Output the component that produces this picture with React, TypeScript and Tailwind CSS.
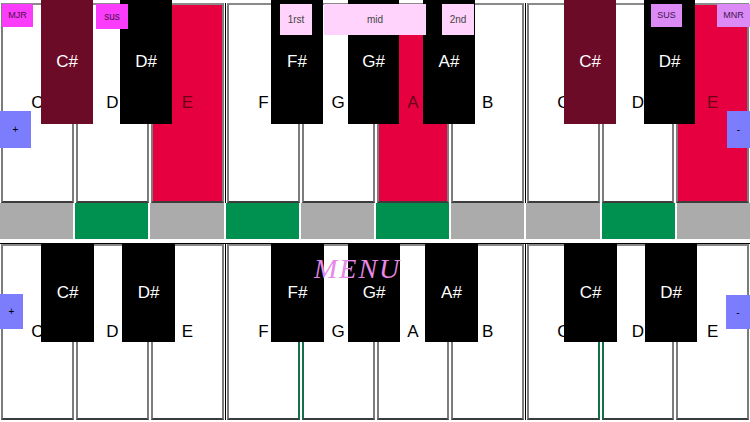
type Tone = 'white' | 'red'

type WKey = { label: string; tone?: Tone; left?: string; right?: string }

const topGroups: WKey[][] = [
  [{ label: 'C' }, { label: 'D' }, { label: 'E', tone: 'red' }],
  [{ label: 'F' }, { label: 'G' }, { label: 'A', tone: 'red' }, { label: 'B' }],
  [{ label: 'C' }, { label: 'D' }, { label: 'E', tone: 'red' }],
]

const bottomGroups: WKey[][] = [
  [{ label: 'C' }, { label: 'D' }, { label: 'E' }],
  [{ label: 'F', right: 'green' }, { label: 'G', left: 'green' }, { label: 'A' }, { label: 'B' }],
  [{ label: 'C', right: 'green' }, { label: 'D', left: 'green' }, { label: 'E' }],
]

const bars = [false, true, false, true, false, true, false, false, true, false]

type BKey = { label: string; left: number; width: number; dark?: boolean }

const topBlack: BKey[] = [
  { label: 'C#', left: 41, width: 52, dark: true },
  { label: 'D#', left: 120, width: 52 },
  { label: 'F#', left: 271, width: 52 },
  { label: 'G#', left: 348, width: 51 },
  { label: 'A#', left: 423, width: 52 },
  { label: 'C#', left: 564, width: 52, dark: true },
  { label: 'D#', left: 644, width: 51 },
]

const bottomBlack: BKey[] = [
  { label: 'C#', left: 41, width: 53 },
  { label: 'D#', left: 122, width: 53 },
  { label: 'F#', left: 271, width: 53 },
  { label: 'G#', left: 348, width: 52 },
  { label: 'A#', left: 425, width: 53 },
  { label: 'C#', left: 564, width: 53 },
  { label: 'D#', left: 645, width: 52 },
]

function WhiteKey({ k }: { k: WKey }) {
  const bg = k.tone === 'red' ? 'bg-[#e6003f] text-[#6a0019]' : 'bg-white text-black'
  const l = k.left === 'green' ? 'border-l-[#14704a]' : 'border-l-[#7c7c7c]'
  const r = k.right === 'green' ? 'border-r-[#14704a]' : 'border-r-[#7c7c7c]'
  return (
    <div className="flex-1 h-full px-[1px]">
      <div
        className={`h-full border-2 border-t-[#8a8a8a] border-b-[#3c3c3c] ${l} ${r} ${bg} flex items-center justify-center text-[17px]`}
      >
        {k.label}
      </div>
    </div>
  )
}

function Keyboard({ groups }: { groups: WKey[][] }) {
  return (
    <div className="flex h-full">
      {groups.map((g, i) => (
        <div
          key={i}
          className={`flex h-full ${i === 0 ? 'w-[225px]' : i === 1 ? 'w-[300px] border-l border-black' : 'flex-1 border-l border-black'}`}
        >
          {g.map((k, j) => (
            <WhiteKey key={j} k={k} />
          ))}
        </div>
      ))}
    </div>
  )
}

// sharps sit on top of the white keys
function BlackKeys({ keys, top, height }: { keys: BKey[]; top: number; height: number }) {
  return (
    <>
      {keys.map((b, i) => (
        <div
          key={i}
          className={`absolute flex items-center justify-center text-white text-[17px] ${b.dark ? 'bg-[#6c0b27]' : 'bg-black'}`}
          style={{ left: b.left, top, width: b.width, height }}
        >
          {b.label}
        </div>
      ))}
    </>
  )
}

export default function App() {
  return (
    <div className="relative w-[750px] h-[422px] overflow-hidden bg-white font-['Liberation_Sans',Arial,sans-serif]">
      <div className="flex flex-col h-full">
        <div className="h-[203px] pt-[3px]">
          <Keyboard groups={topGroups} />
        </div>
        <div className="flex gap-[2px] h-[36px]">
          {bars.map((on, i) => (
            <div key={i} className={`flex-1 h-full ${on ? 'bg-[#009150]' : 'bg-[#ababab]'}`} />
          ))}
        </div>
        <div className="h-[4px]" />
        <div className="flex-1 border-t border-black pb-[2px]">
          <Keyboard groups={bottomGroups} />
        </div>
      </div>

      <BlackKeys keys={topBlack} top={0} height={124} />
      <BlackKeys keys={bottomBlack} top={244} height={98} />

      <div className="absolute left-[314px] top-[255px] font-['Liberation_Serif',serif] italic text-[28px] tracking-[2px] text-[#e888e8] leading-none">
        MENU
      </div>

      {/* chord badges */}
      <div className="absolute left-[2px] top-[4px] w-[31px] h-[23px] bg-[#fb3cfb] text-[9px] text-[#4a1247] flex items-center justify-center">
        MJR
      </div>
      <div className="absolute left-[96px] top-[4px] w-[32px] h-[25px] bg-[#fb3cfb] text-[10px] text-[#4a1247] flex items-center justify-center">
        sus
      </div>
      <div className="absolute left-[280px] top-[4px] w-[32px] h-[31px] bg-[#ffd3fb] text-[10px] text-[#444] flex items-center justify-center">
        1rst
      </div>
      <div className="absolute left-[324px] top-[4px] w-[102px] h-[31px] bg-[#ffd3fb] text-[10px] text-[#444] flex items-center justify-center">
        mid
      </div>
      <div className="absolute left-[442px] top-[4px] w-[32px] h-[31px] bg-[#ffd3fb] text-[10px] text-[#444] flex items-center justify-center">
        2nd
      </div>
      <div className="absolute left-[651px] top-[4px] w-[31px] h-[23px] bg-[#dc8af6] text-[9px] text-[#3f1650] flex items-center justify-center">
        SUS
      </div>
      <div className="absolute left-[717px] top-[4px] w-[33px] h-[23px] bg-[#dc8af6] text-[9px] text-[#3f1650] flex items-center justify-center">
        MNR
      </div>

      {/* octave buttons */}
      <div className="absolute left-0 top-[111px] w-[31px] h-[37px] bg-[#7c7dfc] text-[10px] text-black flex items-center justify-center">
        +
      </div>
      <div className="absolute left-[727px] top-[111px] w-[23px] h-[37px] bg-[#7c7dfc] text-[10px] text-black flex items-center justify-center">
        -
      </div>
      <div className="absolute left-0 top-[294px] w-[23px] h-[35px] bg-[#7c7dfc] text-[10px] text-black flex items-center justify-center">
        +
      </div>
      <div className="absolute left-[726px] top-[295px] w-[24px] h-[34px] bg-[#7c7dfc] text-[10px] text-black flex items-center justify-center">
        -
      </div>
    </div>
  )
}
